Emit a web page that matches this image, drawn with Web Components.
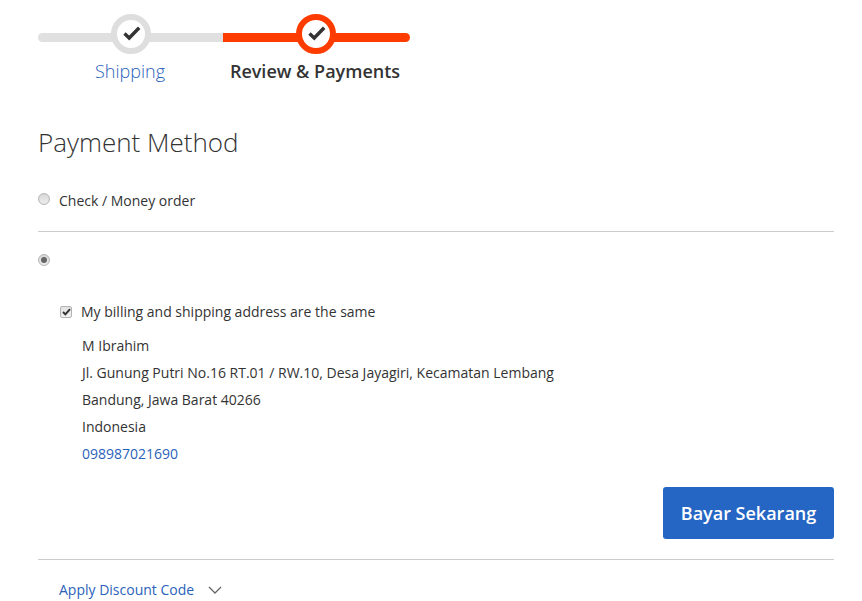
<!DOCTYPE html>
<html lang="en">
<head>
<meta charset="utf-8">
<title>Payment Method</title>
<style>
  html, body { margin: 0; padding: 0; background: #fff; }
  body { font-family: "Open Sans", sans-serif; color: #333; font-size: 14px; overflow: hidden; }
</style>
</head>
<body>
<checkout-page>
  <checkout-progress>
    <progress-step label="Shipping"></progress-step>
    <progress-step label="Review &amp; Payments" active></progress-step>
  </checkout-progress>

  <section-title>Payment Method</section-title>

  <payment-option label="Check / Money order"></payment-option>
  <section-rule></section-rule>
  <payment-option checked>
    <billing-check>My billing and shipping address are the same</billing-check>
    <billing-address phone="098987021690">
      <div>M Ibrahim</div>
      <div>Jl. Gunung Putri No.16 RT.01 / RW.10, Desa Jayagiri, Kecamatan Lembang</div>
      <div>Bandung, Jawa Barat 40266</div>
      <div>Indonesia</div>
    </billing-address>
    <pay-button>Bayar Sekarang</pay-button>
  </payment-option>
  <section-rule></section-rule>
  <discount-toggle>Apply Discount Code</discount-toggle>
</checkout-page>

<script>
"use strict";

class CheckoutPage extends HTMLElement {
  constructor() {
    super();
    this.attachShadow({ mode: "open" }).innerHTML = `
      <style>
        :host { display: block; padding: 14px 28px 0 38px; }
      </style>
      <slot></slot>
    `;
  }
}

class CheckoutProgress extends HTMLElement {
  constructor() {
    super();
    this.attachShadow({ mode: "open" }).innerHTML = `
      <style>
        :host { display: flex; width: 372px; }
      </style>
      <slot></slot>
    `;
  }
}

class ProgressStep extends HTMLElement {
  constructor() {
    super();
    const label = this.getAttribute("label");
    this.attachShadow({ mode: "open" }).innerHTML = `
      <style>
        :host { display: block; flex: 0 0 185px; --tone: #e0e0e0; --ring: #dedede; }
        :host([active]) { flex-basis: 187px; --tone: #ff3c00; --ring: #ff3c00; }
        #track { position: relative; height: 40px; display: flex; align-items: center; justify-content: center; }
        #bar { position: absolute; left: 0; right: 0; top: 19px; height: 9px; background: var(--tone); border-radius: 5px 0 0 5px; }
        :host([active]) #bar { border-radius: 0 5px 5px 0; }
        #dot {
          position: relative; box-sizing: border-box; width: 40px; height: 40px; border-radius: 50%;
          border: 6px solid var(--ring); background: #fff;
          display: flex; align-items: center; justify-content: center; padding: 0 0 2px 2px;
        }
        :host([active]) #dot { margin-left: -2px; }
        svg { display: block; }
        #label { text-align: center; font-size: 18px; line-height: 24px; margin: 5px 1px 0 0; font-weight: 300; color: #2a62ba; }
        :host([active]) #label { font-weight: 600; color: #333; margin-left: -2px; }
      </style>
      <div id="track">
        <div id="bar"></div>
        <div id="dot">
          <svg width="18" height="15" viewBox="0 0 18 15"><path d="M1.5 7.6 L6.2 12 L16.2 1.8" fill="none" stroke="#333" stroke-width="3.4"/></svg>
        </div>
      </div>
      <div id="label"></div>
    `;
    this.shadowRoot.getElementById("label").textContent = label;
  }
}

class SectionTitle extends HTMLElement {
  constructor() {
    super();
    this.attachShadow({ mode: "open" }).innerHTML = `
      <style>
        :host { display: block; margin: 42px 0 13px; font-size: 26px; font-weight: 300; line-height: 34px; color: #333; }
      </style>
      <slot></slot>
    `;
  }
}

class SectionRule extends HTMLElement {
  constructor() {
    super();
    this.attachShadow({ mode: "open" }).innerHTML = `
      <style>
        :host { display: block; height: 1px; background: #ccc; }
      </style>
    `;
  }
}

class PaymentOption extends HTMLElement {
  constructor() {
    super();
    const label = this.getAttribute("label") || "";
    this.attachShadow({ mode: "open" }).innerHTML = `
      <style>
        :host { display: block; padding: 19px 0 20px; }
        :host([checked]) { padding-top: 18px; }
        #head { display: flex; align-items: center; gap: 9px; height: 20px; line-height: 20px; }
        #radio {
          box-sizing: border-box; width: 12px; height: 12px; border-radius: 50%; margin-top: -4px;
          border: 1px solid #b4b4b4;
          background: linear-gradient(#d8d8d8, #ededed);
          display: flex; align-items: center; justify-content: center;
        }
        :host([checked]) #radio { margin-top: 0; }
        #pip { display: none; width: 6px; height: 6px; border-radius: 50%; background: #666; }
        :host([checked]) #pip { display: block; }
        #body { padding-left: 22px; }
        :host([checked]) #body { padding-top: 32px; }
      </style>
      <div id="head"><span id="radio"><span id="pip"></span></span><span id="label"></span></div>
      <div id="body"><slot></slot></div>
    `;
    this.shadowRoot.getElementById("label").textContent = label;
  }
}

class BillingCheck extends HTMLElement {
  constructor() {
    super();
    this.attachShadow({ mode: "open" }).innerHTML = `
      <style>
        :host { display: flex; align-items: center; gap: 9px; line-height: 20px; }
        #box {
          box-sizing: border-box; width: 12px; height: 12px; border-radius: 2px;
          border: 1px solid #b4b4b4; background: linear-gradient(#e2e2e2, #f2f2f2);
          display: flex; align-items: center; justify-content: center;
        }
        svg { display: block; }
      </style>
      <span id="box"><svg width="9" height="8" viewBox="0 0 9 8"><path d="M1 4 L3.4 6.4 L8 1.2" fill="none" stroke="#333" stroke-width="2"/></svg></span>
      <span><slot></slot></span>
    `;
  }
}

class BillingAddress extends HTMLElement {
  constructor() {
    super();
    const phone = this.getAttribute("phone");
    this.attachShadow({ mode: "open" }).innerHTML = `
      <style>
        :host { display: block; margin-top: 10px; padding-left: 22px; line-height: 27px; }
        a { color: #2a62ba; text-decoration: none; display: block; }
      </style>
      <slot></slot>
      <a href="#"></a>
    `;
    this.shadowRoot.querySelector("a").textContent = phone;
  }
}

class PayButton extends HTMLElement {
  constructor() {
    super();
    this.attachShadow({ mode: "open" }).innerHTML = `
      <style>
        :host { display: flex; justify-content: flex-end; margin-top: 20px; }
        button {
          box-sizing: border-box; width: 171px; height: 52px; padding: 0; border: 0; border-radius: 3px;
          background: #2566c4; color: #fff; font: 600 18px "Open Sans", sans-serif;
        }
      </style>
      <button type="button"><slot></slot></button>
    `;
  }
}

class DiscountToggle extends HTMLElement {
  constructor() {
    super();
    this.attachShadow({ mode: "open" }).innerHTML = `
      <style>
        :host { display: flex; align-items: center; gap: 14px; padding: 20px 0 0 21px; line-height: 20px; color: #2a62ba; }
        svg { display: block; }
      </style>
      <span><slot></slot></span>
      <svg width="14" height="8" viewBox="0 0 14 8"><path d="M1 1 L7 7 L13 1" fill="none" stroke="#666" stroke-width="1.3"/></svg>
    `;
  }
}

customElements.define("checkout-page", CheckoutPage);
customElements.define("checkout-progress", CheckoutProgress);
customElements.define("progress-step", ProgressStep);
customElements.define("section-title", SectionTitle);
customElements.define("section-rule", SectionRule);
customElements.define("payment-option", PaymentOption);
customElements.define("billing-check", BillingCheck);
customElements.define("billing-address", BillingAddress);
customElements.define("pay-button", PayButton);
customElements.define("discount-toggle", DiscountToggle);
</script>
</body>
</html>
